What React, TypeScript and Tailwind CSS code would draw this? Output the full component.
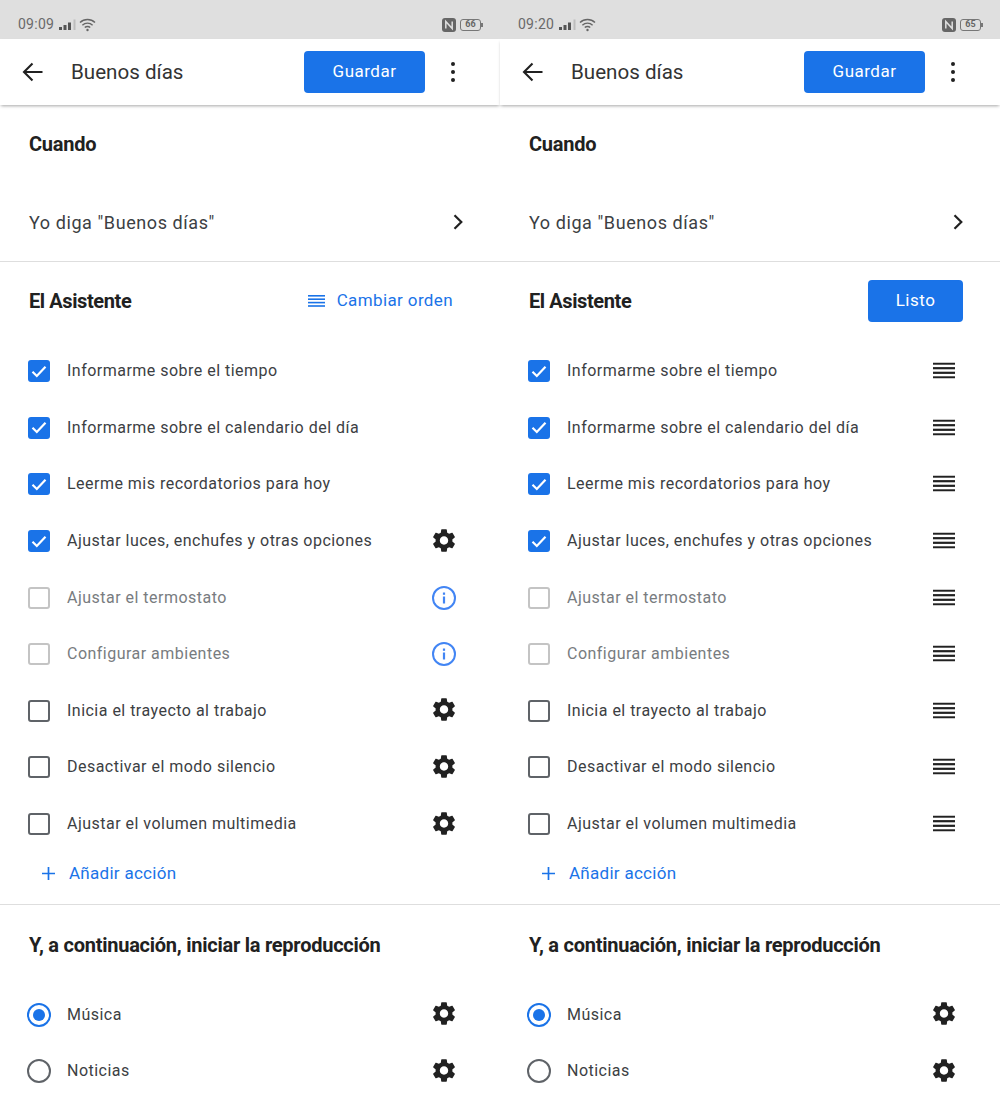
const GEAR =
  "M19.14 12.94c.04-.3.06-.61.06-.94 0-.32-.02-.64-.07-.94l2.03-1.58c.18-.14.23-.41.12-.61l-1.92-3.32c-.12-.22-.37-.29-.59-.22l-2.39.96c-.5-.38-1.03-.7-1.62-.94l-.36-2.54c-.04-.24-.24-.41-.48-.41h-3.84c-.24 0-.43.17-.47.41l-.36 2.54c-.59.24-1.13.57-1.62.94l-2.39-.96c-.22-.08-.47 0-.59.22L2.74 8.87c-.12.21-.08.47.12.61l2.03 1.58c-.05.3-.09.63-.09.94s.02.64.07.94l-2.03 1.58c-.18.14-.23.41-.12.61l1.92 3.32c.12.22.37.29.59.22l2.39-.96c.5.38 1.03.7 1.62.94l.36 2.54c.05.24.24.41.48.41h3.84c.24 0 .44-.17.47-.41l.36-2.54c.59-.24 1.13-.56 1.62-.94l2.39.96c.22.08.47 0 .59-.22l1.92-3.32c.12-.22.07-.47-.12-.61l-2.01-1.58zM12 15.6c-1.98 0-3.6-1.62-3.6-3.6s1.62-3.6 3.6-3.6 3.6 1.62 3.6 3.6-1.62 3.6-3.6 3.6z";

type Action = { label: string; state: "on" | "off" | "disabled"; icon?: "gear" | "info" };

const actions: Action[] = [
  { label: "Informarme sobre el tiempo", state: "on" },
  { label: "Informarme sobre el calendario del día", state: "on" },
  { label: "Leerme mis recordatorios para hoy", state: "on" },
  { label: "Ajustar luces, enchufes y otras opciones", state: "on", icon: "gear" },
  { label: "Ajustar el termostato", state: "disabled", icon: "info" },
  { label: "Configurar ambientes", state: "disabled", icon: "info" },
  { label: "Inicia el trayecto al trabajo", state: "off", icon: "gear" },
  { label: "Desactivar el modo silencio", state: "off", icon: "gear" },
  { label: "Ajustar el volumen multimedia", state: "off", icon: "gear" },
];

function Gear() {
  return (
    <svg width="29" height="29" viewBox="0 0 24 24" className="-translate-y-[1px] fill-[#212121]">
      <path d={GEAR} />
    </svg>
  );
}

function Info() {
  return (
    <svg width="24" height="24" viewBox="0 0 24 24" fill="none">
      <circle cx="12" cy="12" r="11" stroke="#4285f4" strokeWidth="2" />
      <rect x="10.9" y="10.5" width="2.2" height="7" fill="#4285f4" />
      <rect x="10.9" y="6.5" width="2.2" height="2.3" fill="#4285f4" />
    </svg>
  );
}

function Handle() {
  return (
    <svg width="22" height="16" viewBox="0 0 22 16" className="-translate-y-[0.5px] fill-[#212121]">
      <rect y="0" width="22" height="2.2" />
      <rect y="4.6" width="22" height="2.2" />
      <rect y="9.2" width="22" height="2.2" />
      <rect y="13.8" width="22" height="2.2" />
    </svg>
  );
}

function Checkbox({ state }: { state: Action["state"] }) {
  if (state === "on") {
    return (
      <span className="flex h-[22px] w-[22px] items-center justify-center rounded-[3px] bg-[#1a73e8]">
        <svg width="16" height="13" viewBox="0 0 16 13" fill="none">
          <path d="M1.5 6.8 5.8 11 14.5 1.8" stroke="#fff" strokeWidth="2.2" />
        </svg>
      </span>
    );
  }
  return (
    <span
      className={
        state === "off"
          ? "h-[22px] w-[22px] rounded-[3px] border-2 border-[#5f6368]"
          : "h-[22px] w-[22px] rounded-[3px] border-2 border-[#c4c4c4]"
      }
    />
  );
}

function StatusBar({ time, battery }: { time: string; battery: string }) {
  return (
    <div className="flex h-[39px] items-center bg-[#dfdfdf] pl-[18px] pr-[19px] pt-[10px] text-[#6a6a6a]">
      <span className="text-[14px] tracking-[0.25px]">{time}</span>
      <svg width="18" height="12" viewBox="0 0 18 12" className="ml-[5px]">
        <rect x="0" y="8" width="3" height="3" fill="#555" />
        <rect x="4.5" y="6" width="3" height="5" fill="#555" />
        <rect x="9" y="3.5" width="3" height="7.5" fill="#555" />
        <rect x="14.5" y="0.5" width="2" height="10.5" fill="#bdbdbd" />
      </svg>
      <svg width="17" height="14" viewBox="0 0 17 14" fill="none" className="ml-[2px]">
        <path d="M1 4.6a10.6 10.6 0 0 1 15 0" stroke="#666" strokeWidth="1.4" />
        <path d="M3.4 7.2a7.2 7.2 0 0 1 10.2 0" stroke="#666" strokeWidth="1.4" />
        <path d="M5.8 9.6a3.7 3.7 0 0 1 5.4 0" stroke="#666" strokeWidth="1.4" />
        <circle cx="8.5" cy="12" r="1.2" fill="#666" />
      </svg>
      <svg width="14" height="14" viewBox="0 0 14 14" fill="none" className="ml-auto">
        <rect width="14" height="14" rx="3" fill="#666" />
        <path d="M3.8 10.5V3.5L10.2 10.5V3.5" stroke="#dfdfdf" strokeWidth="1.5" />
      </svg>
      <span className="relative ml-[4px] flex h-[12px] w-[21px] items-center justify-center rounded-[3px] border border-[#777] text-[9px] font-bold leading-none text-[#666]">
        {battery}
        <span className="absolute right-[-3px] top-[3px] h-[4px] w-[2px] bg-[#777]" />
      </span>
    </div>
  );
}

function Panel({ time, battery, ordering }: { time: string; battery: string; ordering: boolean }) {
  return (
    <div className="w-[500px] shrink-0">
      <StatusBar time={time} battery={battery} />

      <header className="relative z-10 flex h-[66px] items-center bg-white pl-[20px] pr-[37px] shadow-[0_2px_3px_-1px_rgba(0,0,0,0.35)]">
        <svg width="26" height="26" viewBox="0 0 26 26" fill="none">
          <path d="M22.5 13H4.5M12.5 4.5 4 13l8.5 8.5" stroke="#212121" strokeWidth="2.1" />
        </svg>
        <h1 className="ml-[25px] text-[20.6px] text-[#333]">Buenos días</h1>
        <button className="ml-auto h-[42px] w-[121px] rounded-[4px] bg-[#1a73e8] text-[17px] font-[450] tracking-[0.5px] text-white">
          Guardar
        </button>
        <span className="ml-[18px] flex w-[20px] flex-col items-center gap-[3.5px]">
          <i className="h-[4.5px] w-[4.5px] rounded-full bg-[#212121]" />
          <i className="h-[4.5px] w-[4.5px] rounded-full bg-[#212121]" />
          <i className="h-[4.5px] w-[4.5px] rounded-full bg-[#212121]" />
        </span>
      </header>

      <section className="border-b border-[#dedede]">
        <div className="flex h-[78px] items-center px-[29px]">
          <h2 className="text-[20px] font-bold tracking-[-0.25px] text-[#212121]">Cuando</h2>
        </div>
        <div className="flex h-[78px] items-center pl-[29px] pr-[33px]">
          <span className="text-[18px] tracking-[0.58px] text-[#3c4043]">Yo diga "Buenos días"</span>
          <svg width="18" height="18" viewBox="0 0 18 18" fill="none" className="ml-auto">
            <path d="M5.5 2.2 12.3 9l-6.8 6.8" stroke="#212121" strokeWidth="2.2" />
          </svg>
        </div>
      </section>

      <section className="border-b border-[#dedede]">
        <div className="mb-[3px] flex h-[78px] items-center pl-[29px] pr-[37px]">
          <h2 className="text-[20px] font-bold tracking-[-0.4px] text-[#212121]">El Asistente</h2>
          {ordering ? (
            <button className="ml-auto h-[42px] w-[95px] rounded-[4px] bg-[#1a73e8] text-[17px] font-[450] tracking-[0.5px] text-white">
              Listo
            </button>
          ) : (
            <span className="ml-auto mr-[10px] flex items-center gap-[12px] text-[#1a73e8]">
              <svg width="17" height="12" viewBox="0 0 17 12" className="fill-[#1a73e8]">
                <rect y="0" width="17" height="1.6" />
                <rect y="3.4" width="17" height="1.6" />
                <rect y="6.8" width="17" height="1.6" />
                <rect y="10.2" width="17" height="1.6" />
              </svg>
              <span className="text-[17px] font-[450] tracking-[0.38px]">Cambiar orden</span>
            </span>
          )}
        </div>

        {actions.map((a) => (
          <div key={a.label} className="flex h-[56.6px] items-center pl-[28px] pr-[42px]">
            <Checkbox state={a.state} />
            <span
              className={
                a.state === "disabled"
                  ? "ml-[17px] text-[16px] tracking-[0.48px] text-[#787c80]"
                  : "ml-[17px] text-[16px] tracking-[0.48px] text-[#3c4043]"
              }
            >
              {a.label}
            </span>
            <span className="ml-auto flex w-[28px] justify-center">
              {ordering ? <Handle /> : a.icon === "gear" ? <Gear /> : a.icon === "info" ? <Info /> : null}
            </span>
          </div>
        ))}

        <div className="mb-[10px] flex h-[42px] items-center pl-[41px] text-[#1a73e8]">
          <svg width="15" height="15" viewBox="0 0 15 15" fill="none">
            <path d="M7.5 1v13M1 7.5h13" stroke="#1a73e8" strokeWidth="1.7" />
          </svg>
          <span className="ml-[13px] text-[17px] font-[450] tracking-[0.28px]">Añadir acción</span>
        </div>
      </section>

      <section>
        <div className="mb-[2px] mt-[1px] flex h-[78px] items-center px-[29px]">
          <h2 className="text-[20px] font-bold tracking-[-0.25px] text-[#212121]">
            Y, a continuación, iniciar la reproducción
          </h2>
        </div>
        {["Música", "Noticias"].map((label, i) => (
          <div key={label} className="flex h-[56.6px] items-center pl-[27px] pr-[42px]">
            {i === 0 ? (
              <span className="flex h-[24px] w-[24px] items-center justify-center rounded-full border-[2.5px] border-[#1a73e8]">
                <span className="h-[12px] w-[12px] rounded-full bg-[#1a73e8]" />
              </span>
            ) : (
              <span className="h-[24px] w-[24px] rounded-full border-[2.5px] border-[#5f6368]" />
            )}
            <span className="ml-[16px] text-[16px] tracking-[0.48px] text-[#3c4043]">{label}</span>
            <span className="ml-auto flex w-[28px] justify-center">
              <Gear />
            </span>
          </div>
        ))}
      </section>
    </div>
  );
}

export default function App() {
  return (
    <div className="flex h-[1111px] w-[1000px] overflow-hidden bg-white font-['Roboto',sans-serif]">
      <Panel time="09:09" battery="66" ordering={false} />
      <Panel time="09:20" battery="65" ordering />
    </div>
  );
}
